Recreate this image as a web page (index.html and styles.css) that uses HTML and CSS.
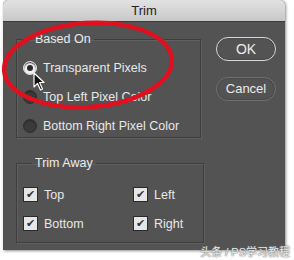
FILE: index.html
```html
<!DOCTYPE html>
<html>
<head>
<meta charset="utf-8">
<link rel="stylesheet" href="styles.css">
</head>
<body>
<div class="dialog">
  <div class="titlebar">Trim</div>
  <div class="content">
    <div class="left">
      <fieldset class="group based">
        <legend>Based On</legend>
        <div class="row"><span class="radio on"></span><span>Transparent Pixels</span></div>
        <div class="row"><span class="radio"></span><span>Top Left Pixel Color</span></div>
        <div class="row"><span class="radio"></span><span>Bottom Right Pixel Color</span></div>
      </fieldset>
      <fieldset class="group trim">
        <legend>Trim Away</legend>
        <div class="grid">
          <div class="row"><span class="check">&#10004;</span><span>Top</span></div>
          <div class="row"><span class="check">&#10004;</span><span>Left</span></div>
          <div class="row"><span class="check">&#10004;</span><span>Bottom</span></div>
          <div class="row"><span class="check">&#10004;</span><span>Right</span></div>
        </div>
      </fieldset>
    </div>
    <div class="buttons">
      <div class="btn ok">OK</div>
      <div class="btn">Cancel</div>
    </div>
  </div>
  <svg class="ellipse" width="294" height="130" viewBox="0 0 294 130">
    <ellipse cx="88" cy="65" rx="84" ry="42" transform="rotate(-4 88 65)" fill="none" stroke="#e0101e" stroke-width="4.5"/>
  </svg>
  <svg class="cursor" width="14" height="20" viewBox="0 0 14 20">
    <path d="M1 1 L1 15 L4.5 11.5 L7.5 18 L9.5 17 L6.5 10.5 L11 10.5 Z" fill="#111" stroke="#fff" stroke-width="1.2" stroke-linejoin="round"/>
  </svg>
</div>
<div class="watermark">头条 / PS学习教程</div>
</body>
</html>
```
FILE: styles.css
```css
html, body {
  margin: 0;
  padding: 0;
  background: #ffffff;
  width: 294px;
  height: 260px;
  overflow: hidden;
  font-family: "Liberation Sans", Arial, "Noto Sans CJK SC", sans-serif;
}
.dialog {
  position: relative;
  margin-left: 3px;
  width: 282px;
  height: 250px;
  background: #535353;
  border-radius: 5px 5px 0 0;
  box-shadow: 1px 1px 3px rgba(0,0,0,0.45);
  display: flex;
  flex-direction: column;
}
.titlebar {
  height: 21px;
  background: linear-gradient(#e2e2e2, #c8c8c8);
  border-radius: 5px 5px 0 0;
  border-bottom: 1px solid #3a3a3a;
  text-align: center;
  font-size: 13px;
  line-height: 21px;
  color: #222;
}
.content {
  display: flex;
  padding: 10px 0 0 13px;
  color: #e8e8e8;
  font-size: 12.5px;
}
.left {
  width: 185px;
  display: flex;
  flex-direction: column;
  gap: 18px;
}
.group {
  margin: 0;
  border: 1px solid #3e3e3e;
  box-shadow: inset 1px 1px 0 #606060, 1px 1px 0 #606060;
  padding: 0;
}
.group legend {
  margin-left: 9px;
  padding: 0 3px;
  font-size: 12.5px;
  color: #ececec;
}
.based {
  height: 97px;
  padding: 7px 0 0 6px;
}
.row {
  display: flex;
  align-items: center;
  gap: 6px;
  height: 29px;
}
.radio {
  width: 12px;
  height: 12px;
  border-radius: 50%;
  background: #3a3a3a;
  border: 1px solid #2e2e2e;
  box-shadow: inset 0 1px 1px #2a2a2a;
  position: relative;
}
.radio.on {
  background: #f0f0f0;
  border-color: #dcdcdc;
}
.radio.on::after {
  content: "";
  position: absolute;
  left: 3px;
  top: 3px;
  width: 6px;
  height: 6px;
  border-radius: 50%;
  background: #2a2a2a;
}
.trim {
  height: 75px;
  padding: 10px 0 0 6px;
}
.grid {
  display: grid;
  grid-template-columns: 110px 70px;
}
.check {
  width: 13px;
  height: 13px;
  background: #e6e6e6;
  border: 1px solid #2a2a2a;
  color: #333;
  font-size: 11px;
  line-height: 13px;
  text-align: center;
  font-family: "DejaVu Sans", sans-serif;
}
.buttons {
  display: flex;
  flex-direction: column;
  gap: 16px;
  margin-left: 15px;
  padding-top: 5px;
}
.btn {
  width: 58px;
  height: 22px;
  border: 1px solid #707070;
  border-radius: 12px;
  text-align: center;
  line-height: 22px;
  font-size: 13px;
  color: #ececec;
  box-shadow: inset 0 0 0 1px #4a4a4a;
}
.btn.ok {
  border-color: #d8d8d8;
  font-size: 14px;
}
.ellipse {
  position: absolute;
  left: -3px;
  top: 0;
  pointer-events: none;
}
.cursor {
  position: absolute;
  left: 30px;
  top: 72px;
}
.watermark {
  position: absolute;
  right: 4px;
  top: 243px;
  font-size: 11px;
  color: #e8e8e8;
  text-shadow: 0 0 2px #777, 0 0 1px #555;
}
```
